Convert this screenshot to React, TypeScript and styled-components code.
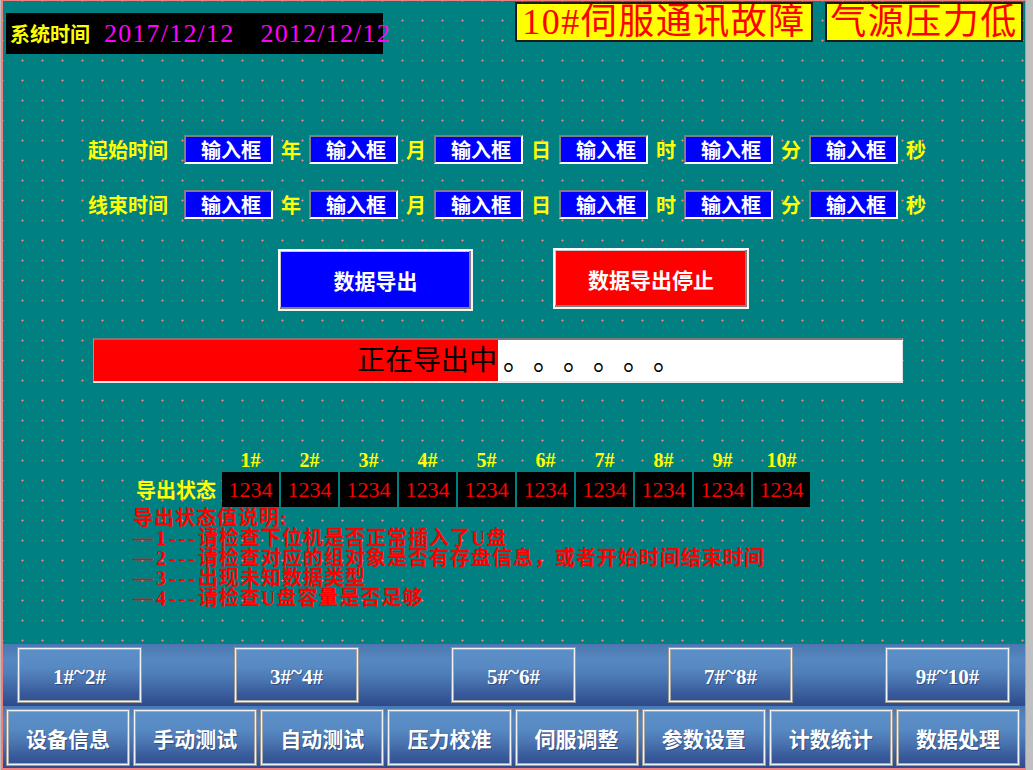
import React from 'react';
import styled, { createGlobalStyle } from 'styled-components';

const Global = createGlobalStyle`
  html, body { margin: 0; padding: 0; background: #c0c0c0; }
  body {
    width: 1033px;
    height: 770px;
    overflow: hidden;
    font-family: "Liberation Serif", "Noto Sans CJK SC", serif;
  }
`;

const CJK = `"Liberation Serif", "Noto Sans CJK SC", sans-serif`;

const Screen = styled.div`
  box-sizing: border-box;
  width: 1025px;
  height: 770px;
  margin-left: 1px;
  border-style: solid;
  border-color: #f08080;
  border-width: 1px 1px 2px 2px;
  display: flex;
  flex-direction: column;
`;

const Stage = styled.div`
  height: 643px;
  flex: none;
  background-color: #008080;
  background-image: radial-gradient(circle at 1.5px 1.5px, #ff7b7b 0.9px, transparent 1.2px);
  background-size: 20px 20px;
  background-position: 18px 18px;
  display: flex;
  flex-direction: column;
`;

const Header = styled.div`
  display: flex;
  justify-content: space-between;
  align-items: flex-start;
  height: 53px;
`;

const ClockBox = styled.div`
  box-sizing: border-box;
  margin: 12px 0 0 3px;
  width: 377px;
  height: 41px;
  background: #000;
  display: flex;
  align-items: center;
  padding-left: 4px;
  white-space: nowrap;
`;

const ClockLabel = styled.span`
  font: 700 20px ${CJK};
  color: #ffff00;
  width: 81px;
`;

const DateText = styled.span<{ $gap: number }>`
  margin-left: ${p => p.$gap}px;
  font: 400 26px "Liberation Serif", serif;
  letter-spacing: 1.2px;
  color: #ff00ff;
`;

const Alarms = styled.div`
  display: flex;
  gap: 12px;
  margin: 1px 2px 0 0;
`;

const AlarmBox = styled.div<{ $w: number }>`
  box-sizing: border-box;
  width: ${p => p.$w}px;
  height: 40px;
  background: #ffff00;
  border: 2px solid #1a1a1a;
  display: flex;
  align-items: center;
  justify-content: center;
  overflow: hidden;
  white-space: nowrap;
  font: 400 36px ${CJK};
  line-height: 36px;
  letter-spacing: 1.5px;
  color: #ff0000;
`;

const TimeRow = styled.div<{ $top: number }>`
  display: flex;
  align-items: center;
  gap: 8px;
  height: 29px;
  margin: ${p => p.$top}px 0 0 85px;
`;

const FieldLabel = styled.span`
  width: 82px;
  margin-right: 6px;
  font: 700 20px ${CJK};
  color: #ffff00;
  white-space: nowrap;
`;

const InputBox = styled.div`
  box-sizing: border-box;
  width: 89px;
  height: 29px;
  background: #0000ff;
  border: 2px solid;
  border-color: #808080 #ffffff #ffffff #808080;
  display: flex;
  align-items: center;
  justify-content: center;
  padding-left: 5px;
  font: 700 20px ${CJK};
  color: #ffffff;
`;

const Unit = styled.span`
  width: 20px;
  font: 700 20px ${CJK};
  color: #ffff00;
`;

const ActionRow = styled.div`
  display: flex;
  align-items: flex-start;
  gap: 80px;
  height: 63px;
  margin: 29px 0 0 275px;
`;

const ActionButton = styled.div<{ $bg: string; $w: number; $h: number; $mt: number }>`
  box-sizing: border-box;
  width: ${p => p.$w}px;
  height: ${p => p.$h}px;
  margin-top: ${p => p.$mt}px;
  background: ${p => p.$bg};
  border: 2px solid;
  border-color: #ffffff #f4f4f4 #f4f4f4 #ffffff;
  box-shadow: inset -2px -2px 0 #808080, inset 1px 1px 0 #c8c8c8;
  display: flex;
  align-items: center;
  justify-content: center;
  font: 700 21px ${CJK};
  color: #ffffff;
`;

const ProgressTrack = styled.div`
  position: relative;
  box-sizing: border-box;
  width: 810px;
  height: 45px;
  margin: 27px 0 0 90px;
  background: #ffffff;
  border-style: solid;
  border-width: 2px 1px 2px 1px;
  border-color: #7a7a7a #e0e0e0 #e8e8e8 #9a9a9a;
  display: flex;
  align-items: center;
  padding-left: 263px;
  overflow: hidden;
`;

const ProgressFill = styled.div<{ $pct: number }>`
  position: absolute;
  left: 0;
  top: 0;
  bottom: 0;
  width: ${p => p.$pct}%;
  background: #ff0000;
`;

const ProgressText = styled.span`
  position: relative;
  font: 400 28px ${CJK};
  line-height: 32px;
  color: #000000;
  white-space: nowrap;
`;

const Periods = styled.span`
  margin-left: 6px;
  letter-spacing: 16px;
`;

const StatusGrid = styled.div`
  display: grid;
  grid-template-columns: 84px repeat(10, 57px);
  grid-template-rows: 20px 35px;
  column-gap: 2px;
  row-gap: 2px;
  margin: 67px 0 0 133px;
`;

const StatusHead = styled.div`
  display: flex;
  align-items: center;
  justify-content: center;
  font: 700 20px "Liberation Serif", serif;
  color: #ffff00;
`;

const StatusLabel = styled.div`
  display: flex;
  align-items: center;
  font: 700 20px ${CJK};
  color: #ffff00;
  white-space: nowrap;
`;

const StatusValue = styled.div`
  background: #000000;
  display: flex;
  align-items: center;
  justify-content: center;
  font: 400 22px "Liberation Serif", serif;
  color: #ff0000;
`;

const Notes = styled.div`
  margin: 1px 0 0 130px;
  font: 700 20px ${CJK};
  line-height: 20px;
  letter-spacing: 1px;
  color: #ff0000;
  white-space: nowrap;
`;

const NoteLine = styled.div`
  height: 20px;
`;

const NotePrefix = styled.span`
  letter-spacing: 3px;
`;

const Dock = styled.div`
  flex: 1;
  display: flex;
  flex-direction: column;
`;

const DockBand = styled.div<{ $pad: string; $gap: number; $spread?: boolean }>`
  box-sizing: border-box;
  height: 62px;
  padding: ${p => p.$pad};
  display: flex;
  gap: ${p => p.$gap}px;
  justify-content: ${p => (p.$spread ? 'space-between' : 'flex-start')};
  background: linear-gradient(
    180deg,
    #4a78b1 0%,
    #5787c0 25%,
    #5080ba 45%,
    #3e63a2 75%,
    #2d4a8a 100%
  );
`;

const DockButton = styled.div<{ $w?: number }>`
  box-sizing: border-box;
  ${p => (p.$w ? `width: ${p.$w}px; flex: none;` : 'flex: 1;')}
  height: 100%;
  border: 1px solid #9a9a9a;
  box-shadow: inset 0 0 0 1px #f2f2f2, inset 0 0 0 2px #a8a8a8;
  background: linear-gradient(
    180deg,
    #5d90c8 0%,
    #5789c2 35%,
    #4a74b0 60%,
    #3a5c9c 82%,
    #304f90 100%
  );
  display: flex;
  align-items: center;
  justify-content: center;
  font: 700 21px ${CJK};
  color: #ffffff;
  text-shadow: 1px 1px 0 rgba(20, 30, 70, 0.45);
  white-space: nowrap;
`;

const NumLabel = styled.span`
  font: 700 21px "Liberation Serif", serif;
`;

const Tilde = styled.span`
  vertical-align: 5px;
`;

const units = ['年', '月', '日', '时', '分', '秒'];
const channels = ['1#', '2#', '3#', '4#', '5#', '6#', '7#', '8#', '9#', '10#'];
const groups: [string, string][] = [
  ['1#', '2#'],
  ['3#', '4#'],
  ['5#', '6#'],
  ['7#', '8#'],
  ['9#', '10#'],
];
const menu = ['设备信息', '手动测试', '自动测试', '压力校准', '伺服调整', '参数设置', '计数统计', '数据处理'];
const notes: [string, string][] = [
  ['1', '请检查下位机是否正常插入了U盘'],
  ['2', '请检查对应的组对象是否有存盘信息，或者开始时间结束时间'],
  ['3', '出现未知数据类型'],
  ['4', '请检查U盘容量是否足够'],
];

function TimeFields({ label, top }: { label: string; top: number }) {
  return (
    <TimeRow $top={top}>
      <FieldLabel>{label}</FieldLabel>
      {units.map(u => (
        <React.Fragment key={u}>
          <InputBox>输入框</InputBox>
          <Unit>{u}</Unit>
        </React.Fragment>
      ))}
    </TimeRow>
  );
}

export default function App() {
  const progress = 50;
  return (
    <>
      <Global />
      <Screen>
        <Stage>
          <Header>
            <ClockBox>
              <ClockLabel>系统时间</ClockLabel>
              <DateText $gap={14}>2017/12/12</DateText>
              <DateText $gap={26}>2012/12/12</DateText>
            </ClockBox>
            <Alarms>
              <AlarmBox $w={298}>10#伺服通讯故障</AlarmBox>
              <AlarmBox $w={198}>气源压力低</AlarmBox>
            </Alarms>
          </Header>

          <TimeFields label="起始时间" top={81} />
          <TimeFields label="线束时间" top={26} />

          <ActionRow>
            <ActionButton $bg="#0000ff" $w={195} $h={62} $mt={1}>数据导出</ActionButton>
            <ActionButton $bg="#ff0000" $w={196} $h={61} $mt={0}>数据导出停止</ActionButton>
          </ActionRow>

          <ProgressTrack>
            <ProgressFill $pct={progress} />
            <ProgressText>
              正在导出中<Periods>。。。。。。</Periods>
            </ProgressText>
          </ProgressTrack>

          <StatusGrid>
            <div />
            {channels.map(c => (
              <StatusHead key={c}>{c}</StatusHead>
            ))}
            <StatusLabel>导出状态</StatusLabel>
            {channels.map(c => (
              <StatusValue key={c}>1234</StatusValue>
            ))}
          </StatusGrid>

          <Notes>
            <NoteLine>导出状态值说明:</NoteLine>
            {notes.map(([n, t]) => (
              <NoteLine key={n}>
                <NotePrefix>—{n}---</NotePrefix>
                {t}
              </NoteLine>
            ))}
          </Notes>
        </Stage>

        <Dock>
          <DockBand $pad="3px 15px 3px 14px" $gap={0} $spread>
            {groups.map(([a, b]) => (
              <DockButton key={a} $w={125}>
                <NumLabel>
                  {a}
                  <Tilde>~</Tilde>
                  {b}
                </NumLabel>
              </DockButton>
            ))}
          </DockBand>
          <DockBand $pad="3px 5px 2px 3px" $gap={3}>
            {menu.map(m => (
              <DockButton key={m}>{m}</DockButton>
            ))}
          </DockBand>
        </Dock>
      </Screen>
    </>
  );
}
